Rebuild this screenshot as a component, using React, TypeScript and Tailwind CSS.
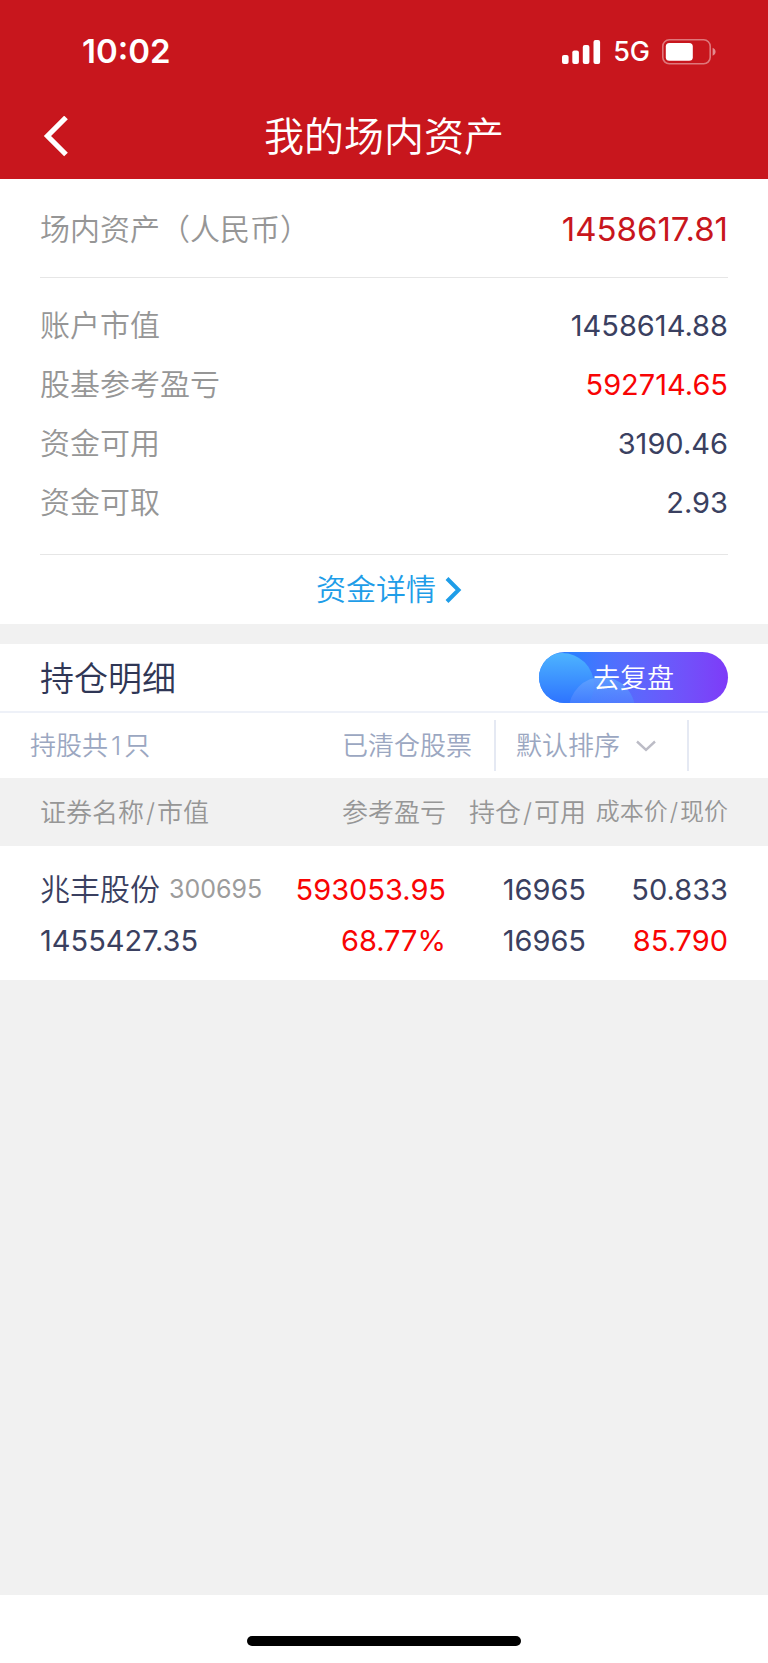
const balances = [
  { label: "账户市值", value: "1458614.88", color: "text-[#3a4060]" },
  { label: "股基参考盈亏", value: "592714.65", color: "text-[#f80404]" },
  { label: "资金可用", value: "3190.46", color: "text-[#3a4060]" },
  { label: "资金可取", value: "2.93", color: "text-[#3a4060]" },
];

const holdings = [
  {
    name: "兆丰股份",
    code: "300695",
    marketValue: "1455427.35",
    profit: "593053.95",
    profitRate: "68.77%",
    amount: "16965",
    available: "16965",
    cost: "50.833",
    price: "85.790",
  },
];

function StatusBar() {
  return (
    <div className="flex h-[94px] items-center justify-between pt-[10px] pr-[52px] pl-[82px]">
      <time className="text-[33px] font-semibold">10:02</time>
      <div className="flex items-center">
        <svg width="39" height="24" viewBox="0 0 39 24" fill="currentColor" aria-hidden="true">
          <rect x="0" y="15" width="6.6" height="9" rx="2" />
          <rect x="10.3" y="10.5" width="6.6" height="13.5" rx="2" />
          <rect x="20.8" y="5" width="6.6" height="19" rx="2" />
          <rect x="31.5" y="0" width="6.6" height="24" rx="2" />
        </svg>
        <span className="ml-3 text-[27px] font-medium">5G</span>
        <svg className="ml-3" width="54" height="26" viewBox="0 0 54 26" aria-hidden="true">
          <rect x="0.8" y="0.8" width="47.4" height="24" rx="6.5" fill="none" stroke="#fff" strokeOpacity="0.42" strokeWidth="1.6" />
          <rect x="3.8" y="4" width="27" height="17.8" rx="3.6" fill="#fff" />
          <path d="M50.6 8.8c1.8.7 3 2.2 3 4s-1.200 3.300-3 4z" fill="#fff" fillOpacity="0.5" />
        </svg>
      </div>
    </div>
  );
}

function NavBar() {
  return (
    <div className="grid h-[85px] grid-cols-[1fr_auto_1fr] items-center px-10">
      <button type="button" aria-label="返回" className="justify-self-start">
        <svg width="32" height="42" viewBox="0 0 32 42" fill="none" stroke="#fff" strokeWidth="5.200" aria-hidden="true">
          <path d="M26 1.500 7.500 20 26 38.500" />
        </svg>
      </button>
      <h1 className="text-[40px] leading-none">我的场内资产</h1>
    </div>
  );
}

function Summary() {
  return (
    <section className="bg-white px-10">
      <dl>
        <div className="flex h-[99px] items-center justify-between border-b border-[#e6e6e6] pt-[3px]">
          <dt className="text-[30px] text-[#969696]">场内资产（人民币）</dt>
          <dd className="text-[33px] font-normal text-[#c8161d]">1458617.81</dd>
        </div>
        <div className="border-b border-[#e6e6e6] pt-[18px] pb-[22px]">
          {balances.map((row) => (
            <div key={row.label} className="flex h-[59px] items-center justify-between">
              <dt className="text-[30px] text-[#969696]">{row.label}</dt>
              <dd className={`text-[29px] font-normal ${row.color}`}>{row.value}</dd>
            </div>
          ))}
        </div>
      </dl>
      <a href="#funds" className="flex h-[69px] items-center justify-center gap-2 pl-3 text-[30px] text-[#1e9de8]">
        资金详情
        <svg width="20" height="26" viewBox="0 0 20 26" fill="none" stroke="currentColor" strokeWidth="4" aria-hidden="true">
          <path d="M3 1.500 14.500 13 3 24.500" />
        </svg>
      </a>
    </section>
  );
}

function ReviewButton() {
  return (
    <button
      type="button"
      className="relative h-[51px] w-[189px] overflow-hidden rounded-full bg-linear-to-r from-[#2e7dff] from-20% to-[#7e3af8] pt-[3px] text-[27px] text-white"
    >
      <svg className="absolute inset-0 h-full w-full" viewBox="0 0 189 51" aria-hidden="true">
        <defs>
          <linearGradient id="bubbleLarge" x1="0" y1="0" x2="0" y2="1">
            <stop offset="0" stopColor="#4db4ff" />
            <stop offset="0.800" stopColor="#2d72ff" />
          </linearGradient>
          <linearGradient id="bubbleSmall" x1="0" y1="0" x2="0" y2="1">
            <stop offset="0" stopColor="#63a4ff" stopOpacity="0.85" />
            <stop offset="0.450" stopColor="#4f80ff" stopOpacity="0.55" />
          </linearGradient>
        </defs>
        <circle cx="23" cy="33" r="32" fill="url(#bubbleLarge)" />
        <circle cx="63" cy="58" r="33" fill="url(#bubbleSmall)" />
      </svg>
      <span className="relative">去复盘</span>
    </button>
  );
}

function HoldingsToolbar() {
  return (
    <div className="flex h-[65px] items-center justify-between bg-white pl-[30px] text-[26px] text-[#9ba7c1]">
      <span>
        持股共<span className="mx-[3px]">1</span>只
      </span>
      <div className="flex h-[51px] items-center">
        <button type="button" className="pr-[22px]">已清仓股票</button>
        <div className="grid h-full w-[195px] items-center border-x-2 border-[#e5e9f3]">
          <select aria-label="排序方式" className="col-start-1 row-start-1 h-full w-full appearance-none bg-transparent pl-5 outline-none">
            <option>默认排序</option>
          </select>
          <svg className="pointer-events-none col-start-1 row-start-1 mr-[31px] justify-self-end" width="20" height="12" viewBox="0 0 20 12" fill="none" stroke="#bcbcc6" strokeWidth="2.400" aria-hidden="true">
            <path d="M1 1.500 10 9.800 19 1.500" />
          </svg>
        </div>
        <div className="w-[79px]" />
      </div>
    </div>
  );
}

function Slash() {
  return <span className="mx-0.5">/</span>;
}

function HoldingsTable() {
  return (
    <table className="w-full table-fixed">
      <colgroup>
        <col />
        <col className="w-[158px]" />
        <col className="w-[140px]" />
        <col className="w-[182px]" />
      </colgroup>
      <thead>
        <tr className="h-[68px] text-right text-[26px] whitespace-nowrap text-[#969696] [&>th]:font-[350]">
          <th className="pl-10 text-left">证券名称<Slash />市值</th>
          <th>参考盈亏</th>
          <th>持仓<Slash />可用</th>
          <th className="pr-10 text-[24px]">成本价<Slash />现价</th>
        </tr>
      </thead>
      <tbody>
        {holdings.map((h) => (
          <tr key={h.code} className="h-[134px] bg-white text-right text-[29px] leading-[51px] font-normal whitespace-nowrap text-[#3a4060] [&>td]:pt-[3px]">
            <td className="pl-10 text-left">
              <div className="flex items-center gap-[9px]">
                <span className="text-[30px] font-[350]">{h.name}</span>
                <span className="text-[25px] text-[#9c9c9c]">{h.code}</span>
              </div>
              <div>{h.marketValue}</div>
            </td>
            <td className="text-[#f80404]">
              <div>{h.profit}</div>
              <div>{h.profitRate}</div>
            </td>
            <td>
              <div>{h.amount}</div>
              <div>{h.available}</div>
            </td>
            <td className="pr-10">
              <div>{h.cost}</div>
              <div className="text-[#f80404]">{h.price}</div>
            </td>
          </tr>
        ))}
      </tbody>
    </table>
  );
}

export default function App() {
  return (
    <div className="flex min-h-screen flex-col bg-[#f1f1f1] font-[Inter,'Noto_Sans_CJK_SC',sans-serif] font-[350]">
      <header className="bg-[#c8161d] text-white">
        <StatusBar />
        <NavBar />
      </header>
      <main className="flex-1">
        <Summary />
        <section className="mt-5">
          <div className="flex h-[69px] items-center justify-between border-b-2 border-[#eef1f8] bg-white px-10">
            <h2 className="pt-0.5 text-[34px] font-[350] text-[#2f3655]">持仓明细</h2>
            <ReviewButton />
          </div>
          <HoldingsToolbar />
          <HoldingsTable />
        </section>
      </main>
      <footer className="flex h-[68px] items-end justify-center bg-white pb-[17px]">
        <div className="h-[10px] w-[274px] rounded-full bg-black" />
      </footer>
    </div>
  );
}
